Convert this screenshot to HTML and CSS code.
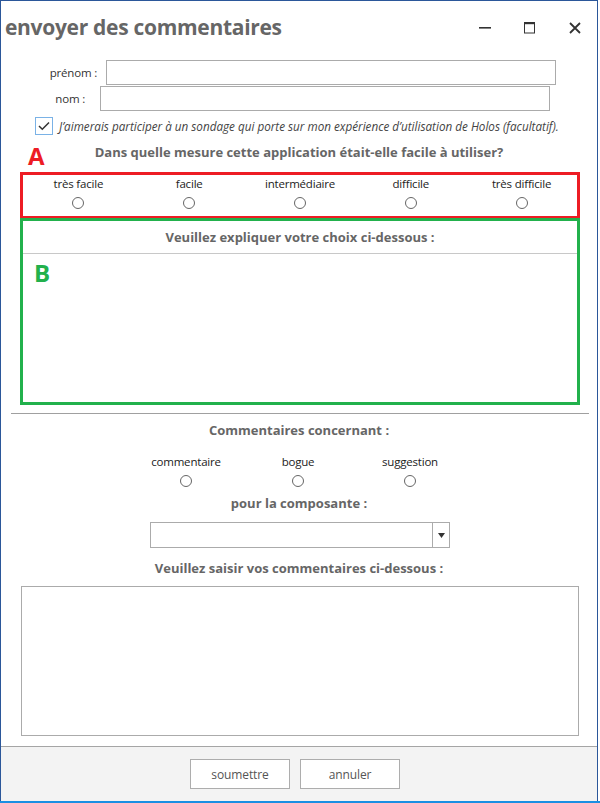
FILE: index.html
```html
<!DOCTYPE html>
<html lang="fr">
<head>
<meta charset="utf-8">
<title>envoyer des commentaires</title>
<link rel="stylesheet" href="styles.css">
</head>
<body>
<div class="window">
  <header class="titlebar">
    <h1 class="title">envoyer des commentaires</h1>
    <div class="controls">
      <span class="ctrl"><svg width="12" height="12" viewBox="0 0 12 12"><rect x="0" y="5" width="12" height="1.6" fill="#333"/></svg></span>
      <span class="ctrl"><svg width="12" height="12" viewBox="0 0 12 12"><rect x="0.5" y="0.5" width="10" height="10.5" fill="none" stroke="#333" stroke-width="1"/><rect x="0" y="0" width="11" height="2.2" fill="#333"/></svg></span>
      <span class="ctrl"><svg width="12" height="12" viewBox="0 0 12 12"><path d="M1 1 L11 11 M11 1 L1 11" stroke="#333" stroke-width="1.8"/></svg></span>
    </div>
  </header>

  <main class="content">
    <div class="field-row row-prenom">
      <label class="field-label">prénom :</label>
      <span class="text-input"></span>
    </div>
    <div class="field-row row-nom">
      <label class="field-label">nom :</label>
      <span class="text-input"></span>
    </div>
    <div class="check-row">
      <span class="checkbox"><svg width="12" height="10" viewBox="0 0 12 10"><path d="M1 5 L4.3 8.3 L11 1.5" fill="none" stroke="#333" stroke-width="1.5"/></svg></span>
      <span class="check-text">J’aimerais participer à un sondage qui porte sur mon expérience d’utilisation de Holos (facultatif).</span>
    </div>

    <div class="question">
      <span class="marker marker-a">A</span>
      <p class="heading">Dans quelle mesure cette application était-elle facile à utiliser?</p>
    </div>

    <div class="box-red">
      <div class="options five">
        <div class="option"><span class="opt-label">très facile</span><span class="radio"></span></div>
        <div class="option"><span class="opt-label">facile</span><span class="radio"></span></div>
        <div class="option"><span class="opt-label">intermédiaire</span><span class="radio"></span></div>
        <div class="option"><span class="opt-label">difficile</span><span class="radio"></span></div>
        <div class="option"><span class="opt-label">très difficile</span><span class="radio"></span></div>
      </div>
    </div>

    <div class="box-green">
      <div class="explain-head">Veuillez expliquer votre choix ci-dessous :</div>
      <div class="explain-body">
        <span class="marker marker-b">B</span>
      </div>
    </div>

    <div class="separator"></div>

    <p class="heading h-concern">Commentaires concernant :</p>
    <div class="options three">
      <div class="option"><span class="opt-label">commentaire</span><span class="radio"></span></div>
      <div class="option"><span class="opt-label">bogue</span><span class="radio"></span></div>
      <div class="option"><span class="opt-label">suggestion</span><span class="radio"></span></div>
    </div>

    <p class="heading h-compo">pour la composante :</p>
    <div class="dropdown">
      <span class="dropdown-value"></span>
      <span class="dropdown-arrow"><svg width="7" height="5" viewBox="0 0 7 5"><path d="M0 0 H7 L3.5 5 Z" fill="#333"/></svg></span>
    </div>

    <p class="heading h-saisir">Veuillez saisir vos commentaires ci-dessous :</p>
    <div class="textarea"></div>
  </main>

  <footer class="footer">
    <button class="btn">soumettre</button>
    <button class="btn">annuler</button>
  </footer>
</div>
<div class="taskbar-edge"></div>
</body>
</html>
```

FILE: styles.css
```css
* { box-sizing: border-box; }

html, body {
  margin: 0;
  padding: 0;
  background: #ffffff;
}

body {
  width: 600px;
  height: 803px;
  overflow: hidden;
  font-family: "Open Sans", "Noto Sans", "DejaVu Sans", sans-serif;
  font-size: 11.5px;
  letter-spacing: -0.2px;
  color: #222;
}

.window {
  width: 598px;
  height: 801px;
  border: 1px solid #2b579a;
  border-bottom: none;
  display: flex;
  flex-direction: column;
  background: #fff;
}

.taskbar-edge {
  width: 600px;
  height: 2px;
  background: #1a8fe3;
}

/* title bar */
.titlebar {
  display: flex;
  justify-content: space-between;
  align-items: flex-start;
  height: 42px;
}

.title {
  margin: 11px 0 0 4px;
  font-size: 21px;
  line-height: 30px;
  font-weight: 700;
  color: #666;
  letter-spacing: -0.3px;
}

.controls {
  display: flex;
  margin-top: 11px;
}

.ctrl {
  width: 45px;
  height: 31px;
  display: flex;
  align-items: center;
  justify-content: center;
}

/* content */
.content {
  display: flex;
  flex-direction: column;
}

.field-row {
  display: flex;
  align-items: center;
  height: 25px;
}

.row-prenom { margin-top: 17px; }
.row-nom { margin-top: 1px; }

.field-label {
  text-align: right;
  color: #333;
}

.row-prenom .field-label { width: 96px; margin-right: 9px; }
.row-nom .field-label { width: 84px; margin-right: 15px; }

.text-input {
  width: 450px;
  height: 25px;
  border: 1px solid #ababab;
  background: #fff;
}

.check-row {
  display: flex;
  align-items: center;
  margin-top: 6px;
  padding-left: 34px;
  height: 18px;
}

.checkbox {
  width: 18px;
  height: 18px;
  border: 1px solid #7ab2e6;
  display: flex;
  align-items: center;
  justify-content: center;
  margin-right: 6px;
  background: #fff;
}

.check-text {
  font-style: italic;
  font-size: 11.7px;
  letter-spacing: 0;
  color: #444;
  white-space: nowrap;
}

.question {
  position: relative;
  margin-top: 9px;
}

.heading {
  margin: 0;
  text-align: center;
  font-weight: 700;
  font-size: 13px;
  letter-spacing: 0;
  color: #666;
  line-height: 16px;
}

.marker {
  position: absolute;
  font-weight: 700;
  font-size: 24px;
  line-height: 24px;
  letter-spacing: 0;
}

.marker-a {
  left: 27px;
  top: 0px;
  color: #ed1c24;
}

.marker-b {
  left: 11px;
  top: 7px;
  color: #22b14c;
}

.box-red {
  margin: 12px 0 0 19px;
  width: 560px;
  height: 47px;
  border: 3px solid #ed1c24;
  padding-top: 1px;
}

.options {
  display: grid;
}

.options.five {
  grid-template-columns: repeat(5, 1fr);
}

.options.three {
  grid-template-columns: repeat(3, 112px);
  justify-content: center;
  margin-top: 16px;
  margin-left: -2px;
}

.option {
  display: flex;
  flex-direction: column;
  align-items: center;
}

.opt-label {
  line-height: 16px;
  color: #222;
  white-space: nowrap;
}

.radio {
  width: 12px;
  height: 12px;
  border: 1px solid #666;
  border-radius: 50%;
  margin-top: 5px;
  background: #fff;
}

.box-green {
  margin: -1px 0 0 19px;
  width: 560px;
  height: 187px;
  border: 3px solid #22b14c;
  position: relative;
}

.explain-head {
  height: 33px;
  line-height: 32px;
  text-align: center;
  font-weight: 700;
  font-size: 13px;
  letter-spacing: 0;
  color: #666;
  border-bottom: 1px solid #c8c8c8;
}

.explain-body {
  position: relative;
}

.separator {
  margin: 8px 8px 0 10px;
  height: 1px;
  background: #a0a0a0;
}

.h-concern { margin-top: 8px; }
.h-compo { margin-top: 8px; }
.h-saisir { margin-top: 12px; }

.dropdown {
  margin: 11px 0 0 149px;
  width: 300px;
  height: 26px;
  border: 1px solid #ababab;
  display: flex;
  background: #fff;
}

.dropdown-value {
  flex: 1;
}

.dropdown-arrow {
  width: 17px;
  border-left: 1px solid #ababab;
  display: flex;
  align-items: center;
  justify-content: center;
}

.textarea {
  margin: 10px 0 0 20px;
  width: 558px;
  height: 150px;
  border: 1px solid #ababab;
  background: #fff;
}

/* footer */
.footer {
  margin-top: auto;
  height: 55px;
  border-top: 1px solid #a5a5a5;
  background: #f3f3f3;
  display: flex;
  align-items: flex-start;
  padding: 12px 0 0 189px;
  gap: 10px;
}

.btn {
  width: 100px;
  height: 30px;
  border: 1px solid #adadad;
  background: #fff;
  font-family: inherit;
  font-size: 12px;
  letter-spacing: -0.1px;
  color: #555;
  padding: 0;
}
```
